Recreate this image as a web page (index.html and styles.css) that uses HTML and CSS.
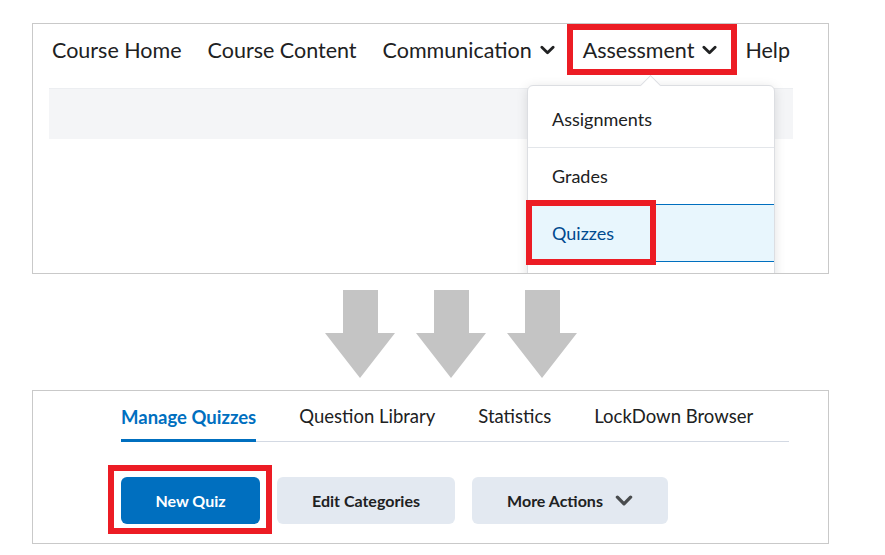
FILE: index.html
```html
<!DOCTYPE html>
<html lang="en">
<head>
  <meta charset="UTF-8" />
  <title>Quizzes</title>
  <link rel="stylesheet" href="styles.css">
</head>
<body>

  <!-- course navbar with the Assessment menu open -->
  <div class="panel top-panel">
    <nav class="navbar">
      <span class="nav-item">Course Home</span>
      <span class="nav-item">Course Content</span>
      <span class="nav-item">Communication <svg class="chev" viewBox="0 0 16 10"><path d="M2 2l6 6 6-6" /></svg></span>
      <span class="nav-item mark mark-nav">Assessment <svg class="chev" viewBox="0 0 16 10"><path d="M2 2l6 6 6-6" /></svg></span>
      <span class="nav-item">Help</span>
    </nav>
    <div class="page-strip"></div>

    <div class="dropdown">
      <div class="dropdown-item">Assignments</div>
      <div class="dropdown-item">Grades</div>
      <div class="dropdown-item active"><span class="mark mark-menu">Quizzes</span></div>
    </div>
  </div>

  <div class="arrows">
    <svg class="arrow" viewBox="0 0 70 88"><polygon points="18,0 53,0 53,43 70,43 35,88 0,43 18,43" /></svg>
    <svg class="arrow" viewBox="0 0 70 88"><polygon points="18,0 53,0 53,43 70,43 35,88 0,43 18,43" /></svg>
    <svg class="arrow" viewBox="0 0 70 88"><polygon points="18,0 53,0 53,43 70,43 35,88 0,43 18,43" /></svg>
  </div>

  <!-- quizzes tool -->
  <div class="panel bottom-panel">
    <div class="tabs">
      <span class="tab selected">Manage Quizzes</span>
      <span class="tab">Question Library</span>
      <span class="tab">Statistics</span>
      <span class="tab">LockDown Browser</span>
    </div>
    <div class="actions">
      <button class="btn primary mark mark-btn">New Quiz</button>
      <button class="btn secondary cat">Edit Categories</button>
      <button class="btn secondary more">More Actions <svg class="chev" viewBox="0 0 16 10"><path d="M2 2l6 6 6-6" /></svg></button>
    </div>
  </div>

</body>
</html>
```

FILE: styles.css
```css
body {
  margin: 0;
  background: #fff;
  font-family: 'Lato', 'Noto Sans', sans-serif;
  color: #202122;
}

.panel {
  box-sizing: border-box;
  width: 797px;
  margin-left: 32px;
  border: 1px solid #c9c9c9;
  background: #fff;
}

.top-panel {
  position: relative;
  margin-top: 23px;
  height: 251px;
  overflow: hidden;
}

.navbar {
  display: flex;
  align-items: center;
  gap: 26px;
  height: 52px;
  padding-left: 19px;
  font-size: 21.5px;
}

.nav-item {
  display: flex;
  align-items: center;
  gap: 8px;
  white-space: nowrap;
}

.chev {
  width: 15px;
  height: 10px;
}

.nav-item .chev {
  margin-right: 2px;
}

.chev path {
  fill: none;
  stroke: #202122;
  stroke-width: 3;
  stroke-linecap: round;
  stroke-linejoin: round;
}

.page-strip {
  margin: 12px 0 0 16px;
  width: 744px;
  height: 50px;
  background: #f4f5f7;
  border-top: 1px solid #eceef1;
}

/* red call-out frames drawn over the controls */
.mark {
  position: relative;
}

.mark::after {
  content: "";
  position: absolute;
  border: 6px solid #ec1c24;
  pointer-events: none;
  z-index: 2;
}

.mark-nav::after {
  left: -16px;
  right: -18px;
  top: -13px;
  bottom: -12px;
}

.mark-menu::after {
  left: -26px;
  right: -42px;
  top: -22px;
  bottom: -21px;
}

.mark-btn::after {
  left: -13px;
  right: -12px;
  top: -12px;
  bottom: -10px;
}

.dropdown {
  position: absolute;
  left: 494px;
  top: 61px;
  width: 248px;
  height: 200px;
  box-sizing: border-box;
  padding-top: 5px;
  background: #fff;
  border: 1px solid #dcdee2;
  border-radius: 6px;
  box-shadow: 0 2px 12px rgba(0, 0, 0, 0.12);
}

/* little pointer under the Assessment button */
.dropdown::before {
  content: "";
  position: absolute;
  left: 115px;
  top: -8px;
  width: 14px;
  height: 14px;
  background: #fff;
  border-left: 1px solid #dcdee2;
  border-top: 1px solid #dcdee2;
  transform: rotate(45deg);
}

.dropdown-item {
  position: relative;
  height: 56px;
  display: flex;
  align-items: center;
  padding-left: 24px;
  font-size: 18px;
  border-bottom: 1px solid #e3e6ea;
}

.dropdown-item.active {
  background: #e8f6fd;
  color: #004a8f;
  border-top: 1px solid #006fbf;
  border-bottom: 1px solid #006fbf;
  margin-top: -1px;
}

.arrows {
  display: flex;
  gap: 21px;
  margin: 16px 0 12px 325px;
}

.arrow {
  width: 70px;
  height: 88px;
}

.arrow polygon {
  fill: #c4c4c4;
}

.bottom-panel {
  height: 154px;
  padding: 0 39px 0 88px;
}

.tabs {
  display: flex;
  gap: 43px;
  height: 50px;
  align-items: flex-end;
  border-bottom: 1px solid #d3d9e3;
  font-size: 18.5px;
}

.tab {
  padding-bottom: 14px;
}

.tab.selected {
  color: #006fbf;
  font-weight: 700;
  border-bottom: 3px solid #006fbf;
  padding-bottom: 11px;
  margin-bottom: -1px;
}

.actions {
  display: flex;
  gap: 17px;
  margin-top: 35px;
}

.btn {
  height: 47px;
  border: none;
  border-radius: 6px;
  font-family: 'Lato', 'Noto Sans', sans-serif;
  font-size: 16px;
  font-weight: 700;
  display: flex;
  align-items: center;
  justify-content: center;
  gap: 12px;
  padding-bottom: 2px;
}

.primary {
  width: 139px;
  background: #006fbf;
  color: #fff;
}

.secondary {
  background: #e3e9f1;
  color: #202122;
}

.cat {
  width: 178px;
}

.more {
  width: 196px;
}

.more .chev {
  width: 18px;
  height: 11px;
}

.more .chev path {
  stroke: #494c4e;
}
```
